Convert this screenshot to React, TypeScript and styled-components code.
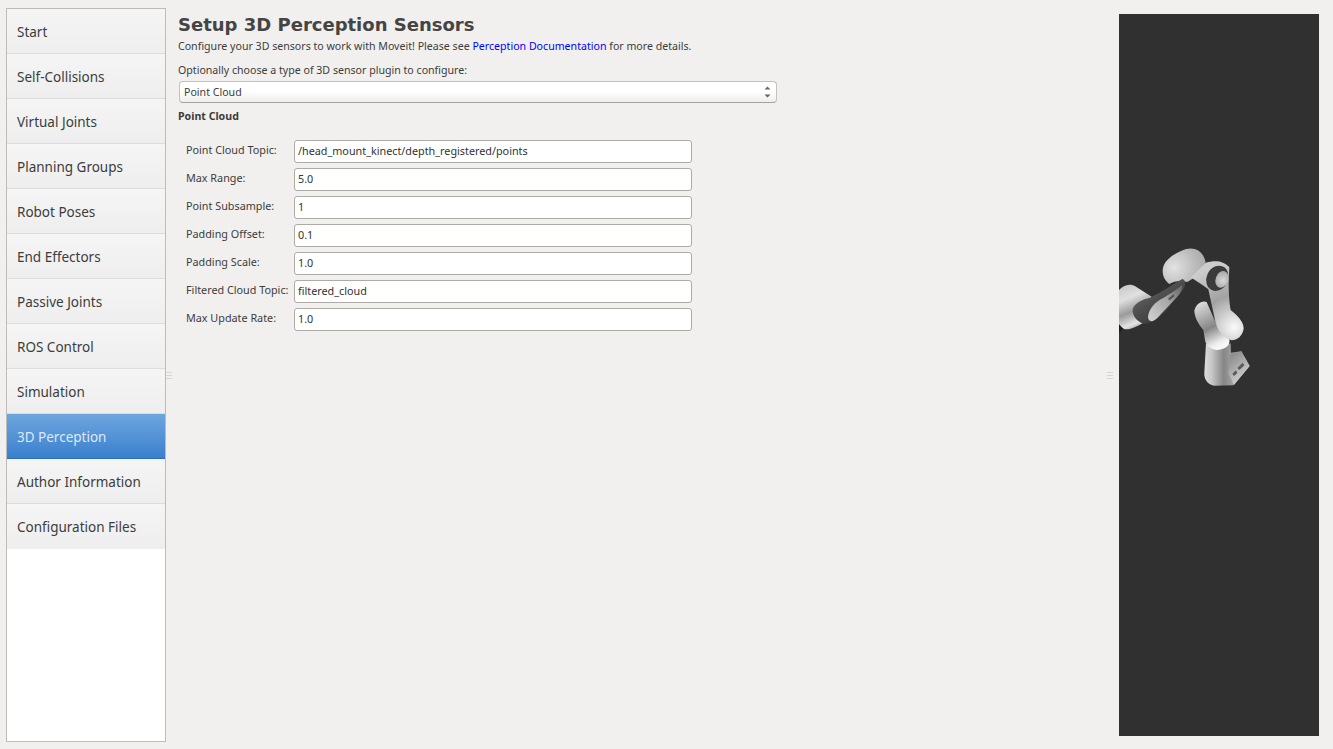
import * as React from 'react';
import styled, { createGlobalStyle } from 'styled-components';

const UI_FONT = '"Noto Sans", "Open Sans", sans-serif';

const GlobalStyle = createGlobalStyle`
  html, body {
    margin: 0;
    padding: 0;
    background: #f1f0ee;
    overflow: hidden;
  }
`;

const Page = styled.div`
  box-sizing: border-box;
  width: 1333px;
  height: 749px;
  display: flex;
  padding: 8px 14px 7px 6px;
  background: #f1f0ee;
  color: #3c3c3c;
  font-family: ${UI_FONT};
  font-size: 10.62px;
`;

const Sidebar = styled.nav`
  box-sizing: border-box;
  flex: none;
  width: 160px;
  display: flex;
  flex-direction: column;
  background: #fff;
  border: 1px solid #bfbcb7;
`;

const NavItem = styled.div<{ $active?: boolean }>`
  box-sizing: border-box;
  height: 45px;
  flex: none;
  display: flex;
  align-items: center;
  padding: 2px 0 0 10px;
  font-size: 13.5px;
  color: ${p => (p.$active ? '#dfe9f5' : '#3c3c3c')};
  background: ${p =>
    p.$active
      ? 'linear-gradient(#6ea6de, #3a80ce)'
      : 'linear-gradient(#f5f5f5, #eeeeee)'};
  border-bottom: 1px solid ${p => (p.$active ? '#2d6db8' : '#dcdcdc')};

  &:last-child {
    border-bottom-color: #eeeeee;
  }
`;

const Splitter = styled.div`
  flex: none;
  width: 12px;
  display: flex;
  align-items: center;
`;

const Grip = styled.div`
  width: 6px;
  height: 7px;
  background: repeating-linear-gradient(#d8d6d2 0 1px, transparent 1px 3px);
`;

const Content = styled.main`
  flex: 1;
  min-width: 0;
  display: flex;
  flex-direction: column;
  align-items: flex-start;
`;

const Title = styled.h1`
  margin: 6px 0 0;
  font-family: "DejaVu Sans", sans-serif;
  font-size: 18px;
  line-height: 22px;
  font-weight: 700;
  color: #444;
`;

const Intro = styled.p`
  margin: 3px 0 0;
  line-height: 15px;
`;

const DocLink = styled.a`
  color: #0000ff;
  text-decoration: none;
`;

const Hint = styled.p`
  margin: 9px 0 0;
  line-height: 15px;
`;

const SelectBox = styled.div`
  box-sizing: border-box;
  width: 598px;
  height: 22px;
  margin: 3px 0 0 1px;
  padding: 0 5px 0 4px;
  display: flex;
  align-items: center;
  justify-content: space-between;
  border: 1px solid #c4c1bc;
  border-bottom-color: #a5a29d;
  border-radius: 4px;
  background: linear-gradient(#ffffff 45%, #efeeec);
`;

const SectionLabel = styled.div`
  margin-top: 6px;
  line-height: 15px;
  font-weight: 700;
`;

const Form = styled.div`
  display: grid;
  grid-template-columns: 108px 398px;
  grid-auto-rows: 23px;
  row-gap: 5px;
  margin: 16px 0 0 8px;
  align-items: center;
  font-size: 10.8px;
`;

const FieldLabel = styled.label`
  line-height: 15px;
  margin-top: -4px;
`;

const FieldBox = styled.div`
  box-sizing: border-box;
  height: 23px;
  padding: 0 3px 2px;
  display: flex;
  align-items: center;
  background: #fff;
  border: 1px solid #aeaba6;
  border-radius: 3px;
  color: #333;
`;

const Viewer = styled.div`
  flex: none;
  width: 200px;
  margin: 6px 0;
  background: #303030;
  overflow: hidden;
`;

const RobotSvg = styled.svg`
  display: block;
  width: 200px;
  height: 722px;
`;

const NAV_ITEMS = [
  'Start',
  'Self-Collisions',
  'Virtual Joints',
  'Planning Groups',
  'Robot Poses',
  'End Effectors',
  'Passive Joints',
  'ROS Control',
  'Simulation',
  '3D Perception',
  'Author Information',
  'Configuration Files',
];

const FIELDS = [
  ['Point Cloud Topic:', '/head_mount_kinect/depth_registered/points'],
  ['Max Range:', '5.0'],
  ['Point Subsample:', '1'],
  ['Padding Offset:', '0.1'],
  ['Padding Scale:', '1.0'],
  ['Filtered Cloud Topic:', 'filtered_cloud'],
  ['Max Update Rate:', '1.0'],
];

const SpinArrows = () => (
  <svg width="7" height="12" viewBox="0 0 7 12">
    <path d="M0.5 3.5 L3.5 0.5 L6.5 3.5 Z M0.5 8.5 L3.5 11.5 L6.5 8.5 Z" fill="#666" />
  </svg>
);

// coordinates are the reference's pixels x3, from a (1100,230) origin
const Robot = () => (
  <RobotSvg viewBox="0 0 200 722">
    <defs>
      <filter id="soft" x="-5%" y="-5%" width="110%" height="110%">
        <feGaussianBlur stdDeviation="1.2" />
      </filter>
      <linearGradient id="hand" gradientUnits="userSpaceOnUse" x1="57" y1="170" x2="110" y2="300">
        <stop offset="0" stopColor="#c8c8c8" />
        <stop offset="0.3" stopColor="#e0e0e0" />
        <stop offset="0.6" stopColor="#9a9a9a" />
        <stop offset="0.85" stopColor="#e4e4e4" />
        <stop offset="1" stopColor="#a0a0a0" />
      </linearGradient>
      <radialGradient id="top" gradientUnits="userSpaceOnUse" cx="222" cy="112" r="110">
        <stop offset="0" stopColor="#e2e2e2" />
        <stop offset="0.55" stopColor="#bdbdbd" />
        <stop offset="1" stopColor="#a4a4a4" />
      </radialGradient>
      <radialGradient id="elbow" gradientUnits="userSpaceOnUse" cx="402" cy="292" r="190">
        <stop offset="0" stopColor="#fafafa" />
        <stop offset="0.25" stopColor="#cfcfcf" />
        <stop offset="0.5" stopColor="#a2a2a2" />
        <stop offset="1" stopColor="#cccccc" />
      </radialGradient>
      <linearGradient id="lower" gradientUnits="userSpaceOnUse" x1="295" y1="225" x2="360" y2="350">
        <stop offset="0" stopColor="#d8d8d8" />
        <stop offset="0.55" stopColor="#868686" />
        <stop offset="0.9" stopColor="#ececec" />
        <stop offset="1" stopColor="#f8f8f8" />
      </linearGradient>
      <linearGradient id="base" gradientUnits="userSpaceOnUse" x1="314" y1="0" x2="396" y2="0">
        <stop offset="0" stopColor="#dcdcdc" />
        <stop offset="0.25" stopColor="#c8c8c8" />
        <stop offset="0.7" stopColor="#868686" />
        <stop offset="1" stopColor="#a0a0a0" />
      </linearGradient>
      <linearGradient id="plate" gradientUnits="userSpaceOnUse" x1="390" y1="380" x2="440" y2="440">
        <stop offset="0" stopColor="#8c8c8c" />
        <stop offset="1" stopColor="#d0d0d0" />
      </linearGradient>
      <linearGradient id="dark" gradientUnits="userSpaceOnUse" x1="105" y1="220" x2="150" y2="285">
        <stop offset="0" stopColor="#585858" />
        <stop offset="1" stopColor="#3c3c3c" />
      </linearGradient>
      <linearGradient id="inner" gradientUnits="userSpaceOnUse" x1="150" y1="270" x2="240" y2="180">
        <stop offset="0" stopColor="#d0d0d0" />
        <stop offset="0.6" stopColor="#a8a8a8" />
        <stop offset="1" stopColor="#707070" />
      </linearGradient>
      <radialGradient id="cap" gradientUnits="userSpaceOnUse" cx="370" cy="150" r="30">
        <stop offset="0" stopColor="#d8d8d8" />
        <stop offset="1" stopColor="#a4a4a4" />
      </radialGradient>
    </defs>
    <g transform="translate(-19 216) scale(0.3333)" filter="url(#soft)">
      <path d="M57 180 C70 165 90 158 108 170 L155 200 L135 275 C110 290 85 303 70 296 L57 305 Z" fill="url(#hand)" />
      <path d="M57 282 C62 288 66 293 71 296 L60 306 L57 305 Z" fill="#1e1e1e" />
      <path d="M188 122 C188 95 215 75 245 62 C275 48 300 58 310 78 C320 95 320 112 304 130 L262 156 C240 150 222 154 208 162 C195 152 188 138 188 122 Z" fill="url(#top)" />
      <path d="M98 238 C104 218 128 208 150 203 C180 190 215 165 247 147 C258 150 258 165 250 178 L200 240 C180 262 155 282 130 281 C112 276 96 258 98 238 Z" fill="url(#dark)" />
      <path d="M144 262 C146 236 165 216 190 204 C208 193 228 180 246 166 C248 182 238 196 226 206 L172 264 C160 276 146 278 144 262 Z" fill="url(#inner)" />
      <path d="M204 206 L220 193 L224 198 L209 211 Z" fill="#555" />
      <path d="M318 340 C345 352 370 352 392 340 L393 368 L424 364 L449 408 L400 466 L342 467 C322 462 312 448 313 428 Z" fill="url(#base)" />
      <path d="M385 428 L392 372 L424 364 L449 408 L402 465 Z" fill="url(#plate)" />
      <path d="M397 431 L408 421 L412 429 L402 438 Z M412 414 L428 398 L433 406 L418 420 Z" fill="#5a5a5a" />
      <path d="M283 242 C288 222 305 210 320 216 L350 285 L388 328 C392 345 378 358 352 360 C335 358 322 350 316 335 L310 300 C295 282 284 262 283 242 Z" fill="url(#lower)" />
      <path d="M272 142 L318 98 C345 90 370 92 388 112 L386 160 C386 190 388 220 392 240 C420 262 432 280 431 297 C426 320 412 330 395 331 C370 325 350 300 345 270 L325 178 C310 165 290 155 272 142 Z" fill="url(#elbow)" />
      <ellipse cx="352" cy="145" rx="32" ry="39" transform="rotate(25 352 145)" fill="#3a3a3a" />
      <ellipse cx="366" cy="148" rx="19" ry="26" transform="rotate(20 366 148)" fill="url(#cap)" />
    </g>
  </RobotSvg>
);

function App() {
  return (
    <Page>
      <GlobalStyle />
      <Sidebar>
        {NAV_ITEMS.map(item => (
          <NavItem key={item} $active={item === '3D Perception'}>{item}</NavItem>
        ))}
      </Sidebar>
      <Splitter><Grip /></Splitter>
      <Content>
        <Title>Setup 3D Perception Sensors</Title>
        <Intro>
          Configure your 3D sensors to work with Moveit! Please see <DocLink href="#">Perception Documentation</DocLink> for more details.
        </Intro>
        <Hint>Optionally choose a type of 3D sensor plugin to configure:</Hint>
        <SelectBox>
          Point Cloud
          <SpinArrows />
        </SelectBox>
        <SectionLabel>Point Cloud</SectionLabel>
        <Form>
          {FIELDS.map(([label, value]) => (
            <React.Fragment key={label}>
              <FieldLabel>{label}</FieldLabel>
              <FieldBox>{value}</FieldBox>
            </React.Fragment>
          ))}
        </Form>
      </Content>
      <Splitter><Grip /></Splitter>
      <Viewer>
        <Robot />
      </Viewer>
    </Page>
  );
}

export default App;
